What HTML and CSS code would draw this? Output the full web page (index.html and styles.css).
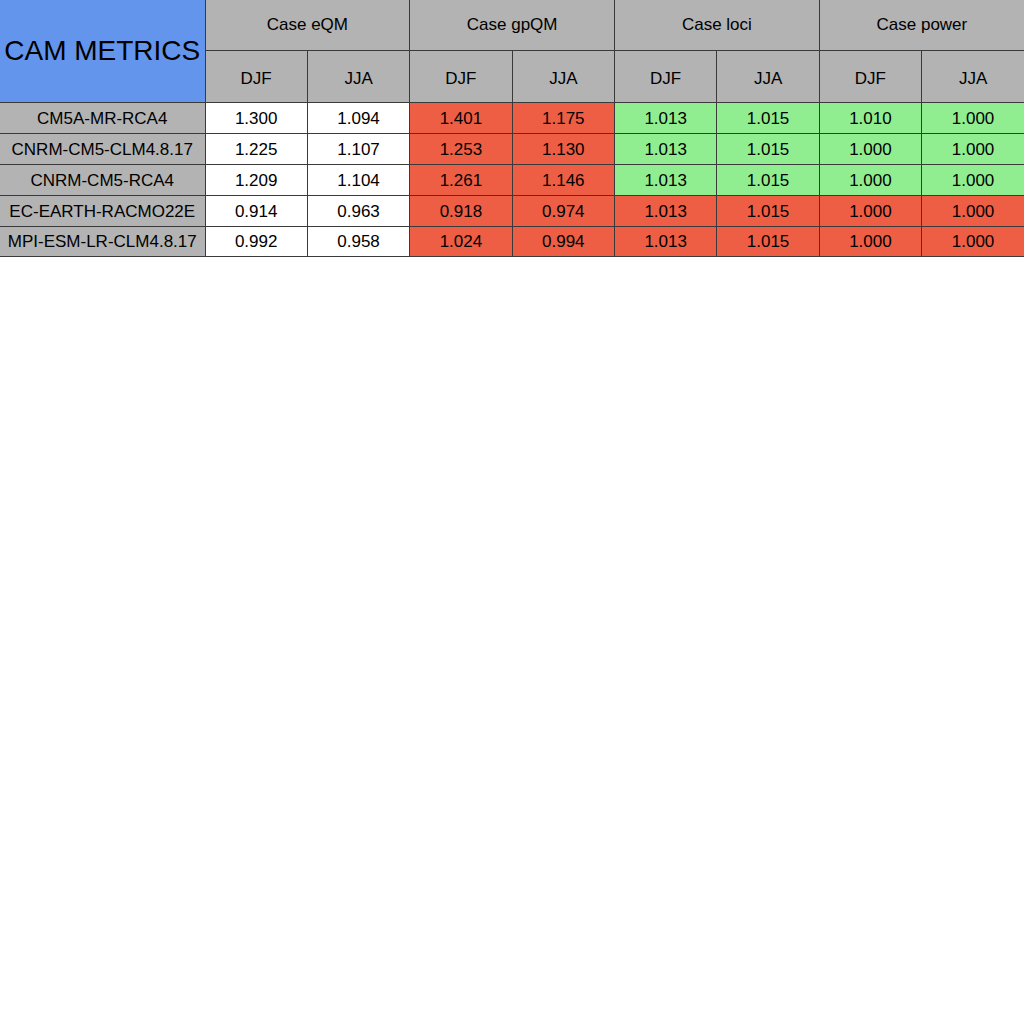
FILE: index.html
```html
<!DOCTYPE html>
<html>
<head>
<meta charset="utf-8">
<title>CAM METRICS</title>
<link rel="stylesheet" href="styles.css">
</head>
<body>
<table class="metrics">
  <colgroup>
    <col class="c-name">
    <col><col><col><col><col><col><col><col>
  </colgroup>
  <thead>
    <tr class="h1">
      <th class="title" rowspan="2">CAM METRICS</th>
      <th colspan="2">Case eQM</th>
      <th colspan="2">Case gpQM</th>
      <th colspan="2">Case loci</th>
      <th colspan="2">Case power</th>
    </tr>
    <tr class="h2">
      <th>DJF</th><th>JJA</th>
      <th>DJF</th><th>JJA</th>
      <th>DJF</th><th>JJA</th>
      <th>DJF</th><th>JJA</th>
    </tr>
  </thead>
  <tbody>
    <tr>
      <th class="name">CM5A-MR-RCA4</th>
      <td class="w">1.300</td><td class="w">1.094</td>
      <td class="r">1.401</td><td class="r">1.175</td>
      <td class="g">1.013</td><td class="g">1.015</td>
      <td class="g">1.010</td><td class="g">1.000</td>
    </tr>
    <tr>
      <th class="name">CNRM-CM5-CLM4.8.17</th>
      <td class="w">1.225</td><td class="w">1.107</td>
      <td class="r">1.253</td><td class="r">1.130</td>
      <td class="g">1.013</td><td class="g">1.015</td>
      <td class="g">1.000</td><td class="g">1.000</td>
    </tr>
    <tr>
      <th class="name">CNRM-CM5-RCA4</th>
      <td class="w">1.209</td><td class="w">1.104</td>
      <td class="r">1.261</td><td class="r">1.146</td>
      <td class="g">1.013</td><td class="g">1.015</td>
      <td class="g">1.000</td><td class="g">1.000</td>
    </tr>
    <tr>
      <th class="name">EC-EARTH-RACMO22E</th>
      <td class="w">0.914</td><td class="w">0.963</td>
      <td class="r">0.918</td><td class="r">0.974</td>
      <td class="r">1.013</td><td class="r">1.015</td>
      <td class="r">1.000</td><td class="r">1.000</td>
    </tr>
    <tr>
      <th class="name">MPI-ESM-LR-CLM4.8.17</th>
      <td class="w">0.992</td><td class="w">0.958</td>
      <td class="r">1.024</td><td class="r">0.994</td>
      <td class="r">1.013</td><td class="r">1.015</td>
      <td class="r">1.000</td><td class="r">1.000</td>
    </tr>
  </tbody>
</table>
</body>
</html>
```
FILE: styles.css
```css
html, body {
  margin: 0;
  padding: 0;
  background: #ffffff;
}
body {
  font-family: "Liberation Sans", Arial, sans-serif;
  color: #000;
}
.metrics {
  width: 1024px;
  table-layout: fixed;
  border-collapse: collapse;
  border-bottom: 1px solid #d0d0d0;
}
.c-name {
  width: 205px;
}
.metrics th,
.metrics td {
  border: 1px solid #3a3a3a;
  padding: 0;
  text-align: center;
  vertical-align: middle;
  font-size: 17px;
  font-weight: normal;
  line-height: 19px;
}
.metrics tr:first-child th {
  border-top: none;
}
.metrics th:first-child {
  border-left: none;
}
.metrics tr > :last-child {
  border-right: none;
}
.h1 th {
  background: #b3b3b3;
  height: 48px;
  padding-bottom: 2px;
}
.h2 th {
  background: #b3b3b3;
  height: 48px;
  padding-top: 3px;
}
.metrics .title {
  background: #6495ed;
  font-size: 28px;
  line-height: 32px;
  padding: 0;
}
tbody th,
tbody td {
  height: 30px;
  padding-top: 1px;
}
tbody tr:last-child th,
tbody tr:last-child td {
  height: 29px;
}
.name {
  background: #b3b3b3;
}
.w { background: #ffffff; }
.r { background: #ee5e44; }
.g { background: #90ee90; }
```
